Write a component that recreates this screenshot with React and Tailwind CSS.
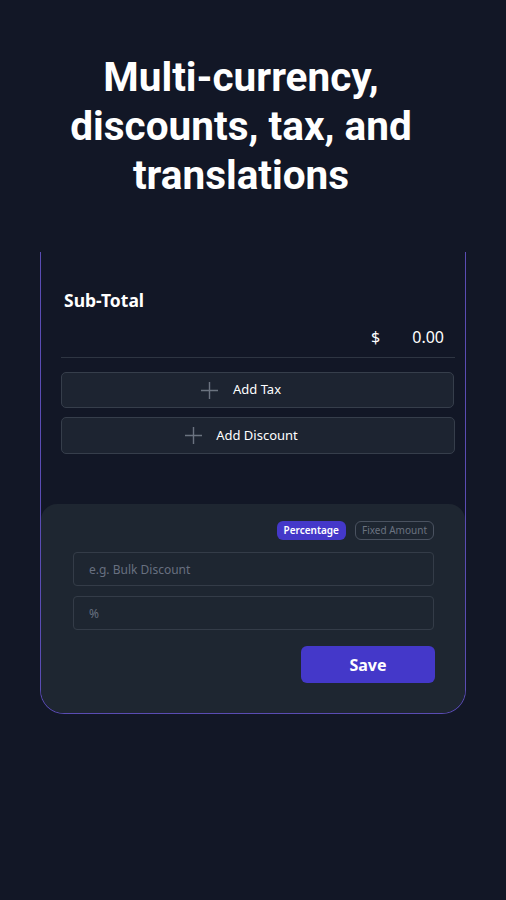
import React, { useState } from 'react'

function Plus() {
  return (
    <svg width="19" height="19" viewBox="0 0 19 19" fill="none" stroke="#6b7380" strokeWidth="1.4">
      <path d="M9.5 1v17M1 9.5h17" />
    </svg>
  )
}

export default function App() {
  const [mode, setMode] = useState('percentage')
  return (
    <main className="min-h-[900px] w-full bg-[#121726] overflow-hidden" style={{ fontFamily: '"Noto Sans", sans-serif' }}>
      <h1 className="pt-[53px] pr-[24px] text-center text-[40.5px] leading-[49px] font-bold text-white" style={{ fontFamily: 'Roboto, sans-serif' }}>
        Multi-currency,<br />discounts, tax, and<br />translations
      </h1>

      <div className="mx-[40px] mt-[52px] border-x-[1.5px] border-b-[1.5px] border-[#5a4cb3] rounded-b-[24px] overflow-hidden">
        <div className="pl-[20px] pr-[10px] pt-[36px]">
          <p className="pl-[3px] text-[17.5px] leading-[24px] font-bold text-white">Sub-Total</p>
          <div className="mt-[13px] flex justify-end pr-[11px] text-[16px] leading-[24px] text-white">
            <span>$</span>
            <span className="ml-[32px]">0.00</span>
          </div>
          <div className="mt-[8px] h-px bg-[#2e3542]" />
          <button type="button" className="mt-[14px] w-[393px] h-[36px] flex items-center justify-center gap-[14px] pr-[34px] rounded-[5px] bg-[#1d2431] border border-[#363e4b] text-[13px] text-white">
            <Plus />
            <span>Add Tax</span>
          </button>
          <button type="button" className="mt-[9px] w-full h-[37px] flex items-center justify-center gap-[13px] pr-[34px] rounded-[5px] bg-[#1d2431] border border-[#363e4b] text-[13px] text-white">
            <Plus />
            <span>Add Discount</span>
          </button>
        </div>

        <div className="mt-[50px] bg-[#1e2631] rounded-t-[16px] pl-[32px] pr-[30px] pt-[17px] pb-[30px]">
          <div className="flex justify-end gap-[9px] pr-[1px]">
            <button type="button" onClick={() => setMode('percentage')} className={`h-[19px] px-[7px] rounded-[6px] text-[10px] font-semibold ${mode === 'percentage' ? 'bg-[#4438c9] text-white' : 'border border-[#4a5260] text-[#6b7380]'}`}>
              Percentage
            </button>
            <button type="button" onClick={() => setMode('fixed')} className={`h-[19px] px-[6px] rounded-[6px] text-[10px] ${mode === 'fixed' ? 'bg-[#4438c9] text-white' : 'border border-[#4a5260] text-[#6b7380]'}`}>
              Fixed Amount
            </button>
          </div>
          <input type="text" placeholder="e.g. Bulk Discount" className="mt-[12px] w-[361px] h-[34px] px-[15px] rounded-[4px] bg-transparent border border-[#343c48] text-[12px] text-white placeholder-[#687080] outline-none" />
          <input type="text" placeholder="%" className="mt-[10px] w-[361px] h-[34px] px-[15px] rounded-[4px] bg-transparent border border-[#343c48] text-[12px] text-white placeholder-[#687080] outline-none" />
          <div className="mt-[16px] flex justify-end">
            <button type="button" className="w-[134px] h-[37px] rounded-[6px] bg-[#4438c9] text-white text-[16px] font-bold">
              Save
            </button>
          </div>
        </div>
      </div>
    </main>
  )
}
